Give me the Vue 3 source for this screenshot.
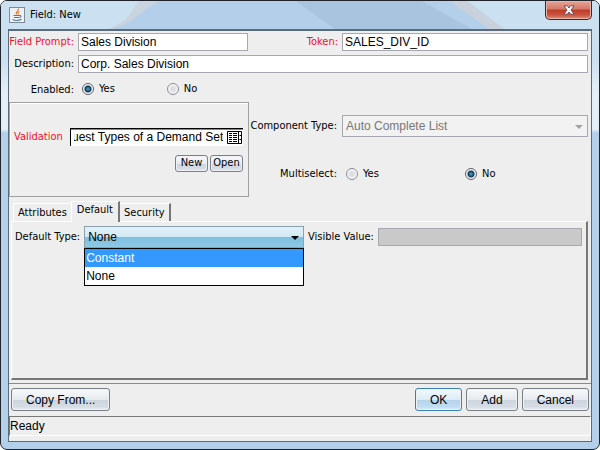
<script setup>
import { ref, onMounted } from 'vue'

const prompt = ref('Sales Division')
const token = ref('SALES_DIV_ID')
const description = ref('Corp. Sales Division')
const enabled = ref('yes')
const multiselect = ref('no')
const validation = ref('Request Types of a Demand Set')
const validationInput = ref(null)

const tabs = ['Attributes', 'Default', 'Security']
const activeTab = ref('Default')

const types = ['Constant', 'None']
const defaultType = ref('None')
const highlighted = ref('Constant')
const listOpen = ref(true)

function pick(type) {
    defaultType.value = type
    listOpen.value = false
}

// keep the end of a long validation name in view
onMounted(() => {
    validationInput.value.scrollLeft = validationInput.value.scrollWidth
})
</script>

<template>
    <div class="window">
        <svg class="glass" viewBox="0 0 600 30" preserveAspectRatio="none" aria-hidden="true">
            <rect width="600" height="30" fill="#b3cfea"/>
            <path d="M0 0H158Q140 12 131 20Q124 26 108 30H0Z" fill="#c9d4df"/>
            <path d="M0 0H138Q132 10 126 18Q119 25 103 30H0Z" fill="#cbe0f1"/>
            <path d="M296 0L336 30H474L422 0Z" fill="#a9c4df"/>
            <path d="M450 0L491 30H506L468 0Z" fill="#c8d1dc"/>
            <path d="M468 0L506 30H600V0Z" fill="#cbe0f1"/>
        </svg>
        <header class="titlebar">
            <svg class="java" viewBox="0 0 16 16" aria-hidden="true">
                <rect x=".5" y=".5" width="15" height="15" fill="#eef1f4" stroke="#7e8c9a"/>
                <path d="M9.5 1.5C10 4 6 4.500 7.500 7.500M10.500 4.500C8.500 5.500 8.500 6 9.500 7.500" fill="none" stroke="#e5823a" stroke-width="1.200"/>
                <path d="M4.500 8.500H10.500M5 10.500H10M10.500 8.500Q13.500 8.500 10.500 10.800M3.500 12.500Q8 14.500 12.500 12.300" fill="none" stroke="#54789a" stroke-width="1.100"/>
            </svg>
            <h1 class="title">Field: New</h1>
            <button class="close" aria-label="Close">
                <svg viewBox="0 0 12 10" aria-hidden="true">
                    <path d="M1 .8H4.300L6 3L7.700 .8H11L8 5L11 9.200H7.700L6 7L4.300 9.200H1L4 5Z" fill="#fff" stroke="#5d4a58" stroke-width=".9"/>
                </svg>
            </button>
        </header>

        <main class="body">
            <div class="form">
                <label class="required" for="prompt">Field Prompt:</label>
                <input id="prompt" v-model="prompt" class="field" type="text">
                <label class="required" for="token">Token:</label>
                <input id="token" v-model="token" class="field" type="text">
                <label for="description">Description:</label>
                <input id="description" v-model="description" class="field wide" type="text">
                <span id="enabled">Enabled:</span>
                <div class="radios" role="radiogroup" aria-labelledby="enabled">
                    <label><input v-model="enabled" type="radio" name="enabled" value="yes">Yes</label>
                    <label><input v-model="enabled" type="radio" name="enabled" value="no">No</label>
                </div>
            </div>

            <div class="middle">
                <section class="validation">
                    <label class="required" for="validation">Validation</label>
                    <div class="lookup">
                        <input id="validation" ref="validationInput" v-model="validation" type="text">
                        <button class="pick" aria-label="Choose validation">
                            <svg viewBox="0 0 15 13" aria-hidden="true">
                                <path d="M.5 .5H14.500V12.500H.5ZM11.500 .5V12.500M12.500 4.500H14.500M12.500 8.500H14.500" fill="#fff" stroke="#000"/>
                                <path d="M2 2.500H5M6 2.500H10M2 4.500H5M6 4.500H10M2 6.500H5M6 6.500H10M2 8.500H5M6 8.500H10M2 10.500H5M6 10.500H10" stroke="#000"/>
                            </svg>
                        </button>
                    </div>
                    <div class="actions">
                        <button class="btn small">New</button>
                        <button class="btn small">Open</button>
                    </div>
                </section>
                <section class="component">
                    <label for="component">Component Type:</label>
                    <div class="combo disabled">
                        <select id="component" disabled>
                            <option>Auto Complete List</option>
                        </select>
                        <svg class="arrow" viewBox="0 0 8 4" aria-hidden="true"><path d="M0 0H8L4 4Z"/></svg>
                    </div>
                    <span id="multi">Multiselect:</span>
                    <div class="radios even" role="radiogroup" aria-labelledby="multi">
                        <label><input v-model="multiselect" type="radio" name="multi" value="yes">Yes</label>
                        <label><input v-model="multiselect" type="radio" name="multi" value="no">No</label>
                    </div>
                </section>
            </div>

            <div class="tabs" role="tablist">
                <button
                    v-for="tab in tabs"
                    :key="tab"
                    role="tab"
                    :class="['tab', { active: tab === activeTab }]"
                    :aria-selected="tab === activeTab"
                    @click="activeTab = tab"
                >{{ tab }}</button>
            </div>
            <section class="panel">
                <label for="type">Default Type:</label>
                <div class="combo">
                    <select id="type" v-model="defaultType">
                        <option v-for="type in types" :key="type">{{ type }}</option>
                    </select>
                    <svg class="arrow" viewBox="0 0 8 4" aria-hidden="true"><path d="M0 0H8L4 4Z"/></svg>
                    <ul v-if="listOpen" class="list" role="listbox">
                        <li
                            v-for="type in types"
                            :key="type"
                            role="option"
                            :class="{ on: type === highlighted }"
                            @mouseenter="highlighted = type"
                            @click="pick(type)"
                        >{{ type }}</li>
                    </ul>
                </div>
                <label for="visible">Visible Value:</label>
                <input id="visible" class="field" type="text" disabled>
            </section>

            <div class="buttons">
                <button class="btn copy">Copy From...</button>
                <button class="btn ok">OK</button>
                <button class="btn">Add</button>
                <button class="btn cancel">Cancel</button>
            </div>
            <footer class="status">Ready</footer>
        </main>
    </div>
</template>

<style>
    body {
        background: #fff;
    }
</style>

<style scoped>
    .window, .window * {
        box-sizing: border-box;
    }

    .window {
        position: relative;
        display: flex;
        flex-direction: column;
        min-height: 100vh;
        padding: 0 7px 7px;
        border: 1px solid #20242c;
        border-radius: 7px;
        overflow: hidden;
        background: linear-gradient(#cbe0f1 60px, #e4eef6 90px, #e4eef6 128px, #b3cfea 132px);
        font: 11px/14px 'DejaVu Sans Condensed', 'Noto Sans', sans-serif;
        color: #000;
    }

    .glass {
        position: absolute;
        top: 0;
        left: 0;
        width: 100%;
        height: 29px;
    }

    .titlebar {
        position: relative;
        display: flex;
        align-items: center;
        height: 28px;
        padding-left: 1px;
    }

    .java {
        width: 16px;
        height: 16px;
    }

    .title {
        flex: 1;
        margin: 0;
        padding-left: 5px;
        font: 11px/16px 'DejaVu Sans Condensed', 'Noto Sans', sans-serif;
    }

    .close {
        align-self: flex-start;
        display: flex;
        align-items: center;
        justify-content: center;
        width: 47px;
        height: 19px;
        padding: 0;
        border: 1px solid #4b1f22;
        border-top: 0;
        border-radius: 0 0 5px 5px;
        background: linear-gradient(#e5a496, #d5796a 45%, #bf3c27 50%, #c9513d 75%, #dd8d74);
        box-shadow: inset 0 0 0 1px #e9b5a9;
    }

    .close svg {
        width: 12px;
        height: 10px;
    }

    .body {
        position: relative;
        flex: 1;
        display: flex;
        flex-direction: column;
        padding-top: 2px;
        border: 1px solid #5c6b7a;
        border-top-width: 2px;
        background: #eee;
    }

    .form {
        display: grid;
        grid-template-columns: 65px 170fr 86px 246fr;
        gap: 4px;
        align-items: center;
        padding-right: 3px;
        text-align: right;
        white-space: nowrap;
    }

    .required {
        color: #f01028;
    }

    .field {
        width: 100%;
        min-width: 0;
        height: 18px;
        padding: 0 2px;
        border: 1px solid #a5a8b0;
        background: #fff;
        font: 12px/16px 'Liberation Sans', Arial, sans-serif;
        color: #000;
    }

    .field:disabled {
        background: #c9c9c9;
    }

    .wide {
        grid-column: 2 / -1;
    }

    .radios {
        display: flex;
        gap: 52px;
        padding: 5px 4px 6px;
    }

    .radios label {
        display: flex;
        align-items: center;
        gap: 5px;
    }

    input[type='radio'] {
        appearance: none;
        width: 12px;
        height: 12px;
        margin: 0;
        border: 1px solid #888d94;
        border-radius: 50%;
        background: radial-gradient(circle, #dcdee0 2px, #fafafa 5px);
    }

    input[type='radio']:checked {
        border-color: #5b6068;
        background: radial-gradient(circle, #4aa6dc 0, #12384f 3px, #e8edf1 4px, #fff 5px);
    }

    .middle {
        display: grid;
        grid-template-columns: minmax(0, 240fr) minmax(0, 339fr);
        padding-right: 3px;
    }

    .validation {
        display: grid;
        grid-template-columns: 52px minmax(0, 1fr);
        gap: 9px 4px;
        align-items: center;
        align-content: center;
        height: 95px;
        padding: 0 5px 0 4px;
        border: 1px solid #a0a0a0;
        box-shadow: inset 1px 1px #fff;
    }

    .lookup {
        display: flex;
        align-items: center;
        height: 18px;
        border: 1px solid #000;
        border-width: 1px 0 0 1px;
        background: #fff;
        box-shadow: inset 0 1px #888;
    }

    .lookup input {
        flex: 1;
        min-width: 0;
        height: 15px;
        margin-left: 3px;
        padding: 0;
        border: 0;
        background: none;
        font: 12px/15px 'Liberation Sans', Arial, sans-serif;
    }

    .pick {
        display: flex;
        margin: 0 1px 0 4px;
        padding: 0;
        border: 0;
        background: none;
    }

    .pick svg {
        width: 15px;
        height: 13px;
    }

    .actions {
        grid-column: 1 / -1;
        display: flex;
        justify-content: flex-end;
        gap: 2px;
    }

    .btn {
        height: 23px;
        padding: 0 14px;
        border: 1px solid #7a8088;
        border-radius: 3px;
        background: linear-gradient(#f8fafb, #e6eaef 50%, #ccd5de 52%, #d5dce4 85%, #edf0f3);
        box-shadow: inset 0 0 0 1px #eef1f4;
        font: 12px/16px 'Liberation Sans', Arial, sans-serif;
        color: #000;
    }

    .small {
        width: 33px;
        height: 17px;
        padding: 0;
        font: 11px/14px 'DejaVu Sans Condensed', 'Noto Sans', sans-serif;
    }

    .component {
        display: grid;
        grid-template-columns: 88px 1fr;
        grid-template-rows: 23px 16px;
        gap: 29px 5px;
        align-items: center;
        align-content: start;
        padding-top: 12px;
        text-align: right;
        white-space: nowrap;
    }

    .even {
        gap: 0;
        padding: 0 4px;
    }

    .even label {
        width: 52%;
    }

    .combo {
        position: relative;
        min-width: 0;
    }

    .combo select {
        display: block;
        appearance: none;
        width: 100%;
        height: 22px;
        padding: 0 3px;
        border: 1px solid #8ba0ae;
        border-radius: 0;
        background: linear-gradient(#e2f1f9, #d0e8f4 50%, #7fbfe0 52%, #8ec9e6);
        font: 12px/16px 'Liberation Sans', Arial, sans-serif;
        color: #000;
        opacity: 1;
    }

    .disabled select {
        border-color: #a5a8b0;
        background: #f2f2f2;
        color: #777;
    }

    .arrow {
        position: absolute;
        top: 10px;
        right: 5px;
        width: 8px;
        height: 4px;
        pointer-events: none;
    }

    .disabled .arrow {
        fill: #a0a3aa;
    }

    .list {
        position: absolute;
        top: 100%;
        left: 0;
        right: 0;
        z-index: 1;
        margin: 0;
        padding: 0;
        border: 1px solid #000;
        background: #fff;
        list-style: none;
        font: 12px/18px 'Liberation Sans', Arial, sans-serif;
    }

    .list li {
        padding-left: 1px;
    }

    .list .on {
        background: #3399ff;
        color: #fff;
    }

    .tabs {
        display: flex;
        align-items: flex-end;
        height: 24px;
        padding-left: 4px;
    }

    .tab {
        height: 18px;
        padding: 0 4px;
        border: 1px solid #fff;
        border-width: 1px 2px 0 0;
        border-right-color: #777;
        background: #eee;
        font: 11px/14px 'DejaVu Sans Condensed', 'Noto Sans', sans-serif;
        color: #000;
    }

    .tab:first-child {
        border-left: 1px solid #fff;
        border-right: 0;
    }

    .tab.active {
        position: relative;
        height: 21px;
        margin-bottom: -1px;
        padding: 0 5px 4px;
        border-left: 1px solid #fff;
    }

    .panel {
        flex: 1;
        display: grid;
        grid-template-columns: auto 222fr auto 206fr;
        gap: 4px;
        align-items: center;
        align-content: start;
        min-height: 120px;
        margin: 0 3px 3px 2px;
        padding: 4px 4px 5px 3px;
        border: 1px solid #fff;
        border-right: 2px solid #777;
        border-bottom: 2px solid #777;
    }

    .buttons {
        display: flex;
        gap: 4px;
        padding: 4px 2px 5px;
        border-top: 1px solid #8a8a8f;
    }

    .copy {
        margin-right: auto;
    }

    .ok {
        border-color: #3c7fb1;
        background: linear-gradient(#f2f9fd, #dcecf7 50%, #b4d3ec 52%, #c0dcf2 85%, #e0f0fa);
    }

    .status {
        margin-bottom: 5px;
        border: 1px solid #777;
        border-right-color: #fff;
        border-bottom-color: #fff;
        font: 12px/18px 'Liberation Sans', Arial, sans-serif;
    }
</style>
